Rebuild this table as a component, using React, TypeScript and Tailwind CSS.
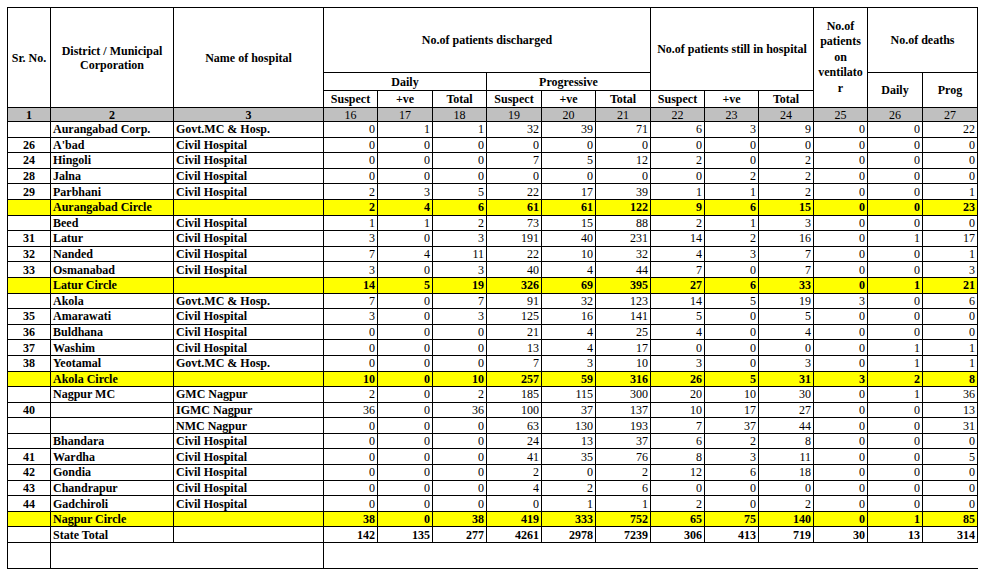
type Row = {
  sr?: string;
  district?: string;
  hospital?: string;
  v: number[];
  circle?: boolean;
  total?: boolean;
};

const rows: Row[] = [
  { district: "Aurangabad Corp.", hospital: "Govt.MC & Hosp.", v: [0, 1, 1, 32, 39, 71, 6, 3, 9, 0, 0, 22] },
  { sr: "26", district: "A'bad", hospital: "Civil Hospital", v: [0, 0, 0, 0, 0, 0, 0, 0, 0, 0, 0, 0] },
  { sr: "24", district: "Hingoli", hospital: "Civil Hospital", v: [0, 0, 0, 7, 5, 12, 2, 0, 2, 0, 0, 0] },
  { sr: "28", district: "Jalna", hospital: "Civil Hospital", v: [0, 0, 0, 0, 0, 0, 0, 2, 2, 0, 0, 0] },
  { sr: "29", district: "Parbhani", hospital: "Civil Hospital", v: [2, 3, 5, 22, 17, 39, 1, 1, 2, 0, 0, 1] },
  { district: "Aurangabad Circle", circle: true, v: [2, 4, 6, 61, 61, 122, 9, 6, 15, 0, 0, 23] },
  { district: "Beed", hospital: "Civil Hospital", v: [1, 1, 2, 73, 15, 88, 2, 1, 3, 0, 0, 0] },
  { sr: "31", district: "Latur", hospital: "Civil Hospital", v: [3, 0, 3, 191, 40, 231, 14, 2, 16, 0, 1, 17] },
  { sr: "32", district: "Nanded", hospital: "Civil Hospital", v: [7, 4, 11, 22, 10, 32, 4, 3, 7, 0, 0, 1] },
  { sr: "33", district: "Osmanabad", hospital: "Civil Hospital", v: [3, 0, 3, 40, 4, 44, 7, 0, 7, 0, 0, 3] },
  { district: "Latur Circle", circle: true, v: [14, 5, 19, 326, 69, 395, 27, 6, 33, 0, 1, 21] },
  { district: "Akola", hospital: "Govt.MC & Hosp.", v: [7, 0, 7, 91, 32, 123, 14, 5, 19, 3, 0, 6] },
  { sr: "35", district: "Amarawati", hospital: "Civil Hospital", v: [3, 0, 3, 125, 16, 141, 5, 0, 5, 0, 0, 0] },
  { sr: "36", district: "Buldhana", hospital: "Civil Hospital", v: [0, 0, 0, 21, 4, 25, 4, 0, 4, 0, 0, 0] },
  { sr: "37", district: "Washim", hospital: "Civil Hospital", v: [0, 0, 0, 13, 4, 17, 0, 0, 0, 0, 1, 1] },
  { sr: "38", district: "Yeotamal", hospital: "Govt.MC & Hosp.", v: [0, 0, 0, 7, 3, 10, 3, 0, 3, 0, 1, 1] },
  { district: "Akola Circle", circle: true, v: [10, 0, 10, 257, 59, 316, 26, 5, 31, 3, 2, 8] },
  { district: "Nagpur MC", hospital: "GMC Nagpur", v: [2, 0, 2, 185, 115, 300, 20, 10, 30, 0, 1, 36] },
  { sr: "40", hospital: "IGMC Nagpur", v: [36, 0, 36, 100, 37, 137, 10, 17, 27, 0, 0, 13] },
  { hospital: "NMC Nagpur", v: [0, 0, 0, 63, 130, 193, 7, 37, 44, 0, 0, 31] },
  { district: "Bhandara", hospital: "Civil Hospital", v: [0, 0, 0, 24, 13, 37, 6, 2, 8, 0, 0, 0] },
  { sr: "41", district: "Wardha", hospital: "Civil Hospital", v: [0, 0, 0, 41, 35, 76, 8, 3, 11, 0, 0, 5] },
  { sr: "42", district: "Gondia", hospital: "Civil Hospital", v: [0, 0, 0, 2, 0, 2, 12, 6, 18, 0, 0, 0] },
  { sr: "43", district: "Chandrapur", hospital: "Civil Hospital", v: [0, 0, 0, 4, 2, 6, 0, 0, 0, 0, 0, 0] },
  { sr: "44", district: "Gadchiroli", hospital: "Civil Hospital", v: [0, 0, 0, 0, 1, 1, 2, 0, 2, 0, 0, 0] },
  { district: "Nagpur Circle", circle: true, v: [38, 0, 38, 419, 333, 752, 65, 75, 140, 0, 1, 85] },
  { district: "State Total", total: true, v: [142, 135, 277, 4261, 2978, 7239, 306, 413, 719, 30, 13, 314] },
];

const widths = [43, 123, 150, 54, 55, 54, 55, 54, 55, 54, 54, 55, 54, 55, 55];
const colNums = ["16", "17", "18", "19", "20", "21", "22", "23", "24", "25", "26", "27"];

const cell = "border border-black p-0";

export default function App() {
  return (
    <div className="bg-white w-[995px] h-[578px] pt-[7px] pl-[7px] text-black font-[family-name:'Liberation_Serif','Times_New_Roman',serif] text-[12px] leading-[14px]">
      <table className="table-fixed border-collapse w-[970px]">
        <colgroup>
          {widths.map((w, i) => (
            <col key={i} style={{ width: w }} />
          ))}
        </colgroup>
        <thead className="font-bold">
          <tr className="h-[65px]">
            <th rowSpan={3} className={`${cell} text-center align-middle`}>Sr. No.</th>
            <th rowSpan={3} className={`${cell} text-center align-middle`}>
              District / Municipal
              <br />
              Corporation
            </th>
            <th rowSpan={3} className={`${cell} text-center align-middle`}>Name of hospital</th>
            <th colSpan={6} className={`${cell} text-center align-middle`}>No.of patients discharged</th>
            <th colSpan={3} rowSpan={2} className={`${cell} text-center align-middle`}>
              No.of patients still in hospital
            </th>
            <th rowSpan={3} className={`${cell} text-center align-middle leading-[15.5px]`}>
              No.of
              <br />
              patients
              <br />
              on
              <br />
              ventilato
              <br />r
            </th>
            <th colSpan={2} className={`${cell} text-center align-middle`}>No.of deaths</th>
          </tr>
          <tr className="h-[18px]">
            <th colSpan={3} className={`${cell} text-center`}>Daily</th>
            <th colSpan={3} className={`${cell} text-center`}>Progressive</th>
            <th rowSpan={2} className={`${cell} text-center`}>Daily</th>
            <th rowSpan={2} className={`${cell} text-center`}>Prog</th>
          </tr>
          <tr className="h-[17px]">
            {["Suspect", "+ve", "Total", "Suspect", "+ve", "Total", "Suspect", "+ve", "Total"].map((t, i) => (
              <th key={i} className={`${cell} text-center`}>
                {t}
              </th>
            ))}
          </tr>
          <tr className="h-[14px] bg-[#c0c0c0] leading-[12px]">
            <th className={`${cell} text-center`}>1</th>
            <th className={`${cell} text-center`}>2</th>
            <th className={`${cell} text-center`}>3</th>
            {colNums.map((n) => (
              <th key={n} className={`${cell} text-center font-normal`}>
                {n}
              </th>
            ))}
          </tr>
        </thead>
        <tbody>
          {rows.map((r, i) => {
            const bold = r.circle || r.total;
            return (
              <tr key={i} className={`h-[15.6px] ${r.circle ? "bg-[#ffff00]" : ""}`}>
                <td className={`${cell} text-center font-bold`}>{r.sr}</td>
                <td className={`${cell} pl-[2px] font-bold whitespace-nowrap`}>{r.district}</td>
                <td className={`${cell} pl-[2px] font-bold whitespace-nowrap`}>{r.hospital}</td>
                {r.v.map((n, j) => (
                  <td key={j} className={`${cell} text-right pr-[2px] ${bold ? "font-bold" : ""}`}>
                    {n}
                  </td>
                ))}
              </tr>
            );
          })}
          <tr className="h-[26px]">
            <td className={cell}></td>
            <td colSpan={2} className={cell}></td>
            <td colSpan={12} className="border-t border-b border-l border-black border-r-0 p-0"></td>
          </tr>
        </tbody>
      </table>
    </div>
  );
}
